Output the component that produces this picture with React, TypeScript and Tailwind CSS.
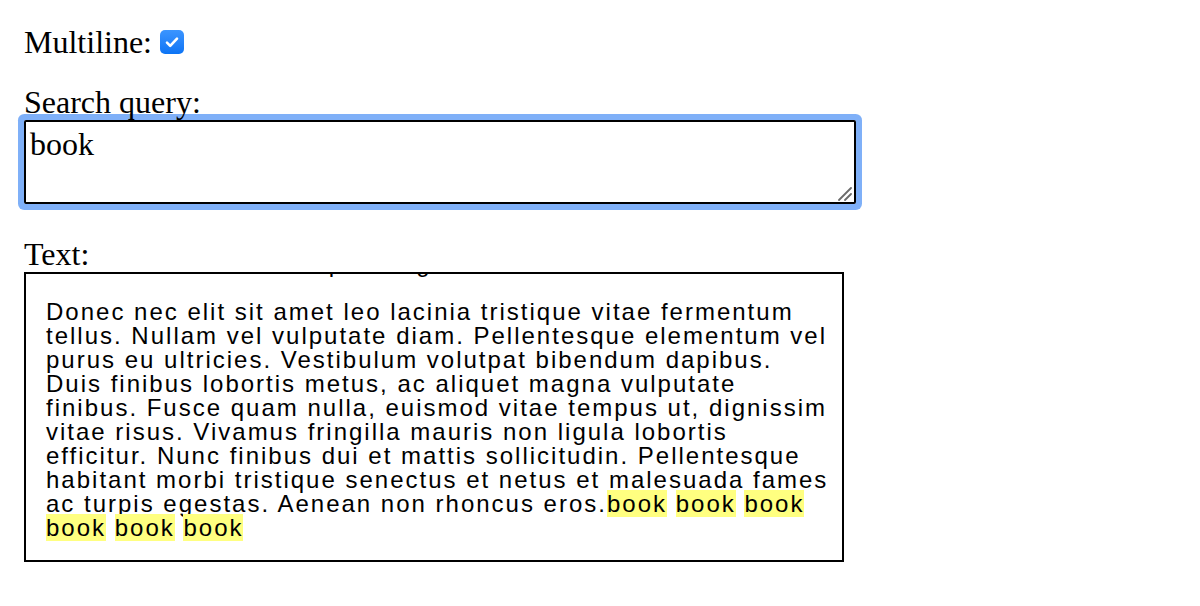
import { useEffect, useRef, useState } from "react";

const query = "book";

export default function App() {
  const [multiline, setMultiline] = useState(true);
  const boxRef = useRef<HTMLDivElement>(null);

  useEffect(() => {
    if (boxRef.current) boxRef.current.scrollTop = boxRef.current.scrollHeight;
  }, []);

  return (
    <div className="min-h-screen bg-white p-6 font-['Liberation_Serif',serif] text-[32px] text-black">
      <label className="flex h-9 items-center leading-9">
        Multiline:
        <span
          onClick={() => setMultiline(!multiline)}
          className={`ml-2 flex h-6 w-6 items-center justify-center rounded-[5px] ${multiline ? "bg-gradient-to-b from-[#3b95ff] to-[#0a74f5]" : "border border-gray-400 bg-white"}`}
        >
          {multiline && (
            <svg width="16" height="16" viewBox="0 0 16 16" fill="none">
              <path d="M3 8.6l3.2 3.2L13 4.6" stroke="white" strokeWidth="2.6" strokeLinecap="round" strokeLinejoin="round" />
            </svg>
          )}
        </span>
      </label>

      <div className="relative z-10 mt-6 leading-9">Search query:</div>
      <div className="relative w-[832px]">
        <textarea
          defaultValue={query}
          className="block h-[84px] w-[832px] resize-none rounded-[2px] border-2 border-black px-1 py-1 font-['Liberation_Serif',serif] text-[32px] leading-9 shadow-[0_0_0_6px_#7fb0f8] outline-none"
        />
        {/* resize grip */}
        <svg className="absolute bottom-[3px] right-[4px]" width="14" height="14" viewBox="0 0 14 14">
          <path d="M1 13L13 1M7 13L13 7" stroke="#6b6b6b" strokeWidth="1.8" strokeLinecap="round" />
        </svg>
      </div>

      <div className="mt-8 leading-9">Text:</div>
      <div
        ref={boxRef}
        className="h-[290px] w-[820px] overflow-hidden border-2 border-black pl-5 pr-[10px] pb-5 font-['Liberation_Sans',Arial,sans-serif] text-[24px] leading-6 tracking-[2px]"
      >
        <p className="pt-5">
          Lorem ipsum dolor sit amet, consectetur adipiscing elit. Praesent
          vulputate quam a nunc tempor, sed pharetra leo porttitor. Quisque
          sagittis augue eget magna placerat, in congue turpis egestas.
          <br />
          Aenean commodo semper ac gravida.
        </p>
        <p className="mt-6">
          Donec nec elit sit amet leo lacinia tristique vitae fermentum tellus.
          Nullam vel vulputate diam. Pellentesque elementum vel purus eu
          ultricies. Vestibulum volutpat bibendum dapibus. Duis finibus lobortis
          metus, ac aliquet magna vulputate finibus. Fusce quam nulla, euismod
          vitae tempus ut, dignissim vitae risus. Vivamus fringilla mauris non
          ligula lobortis efficitur. Nunc finibus dui et mattis sollicitudin.
          Pellentesque habitant morbi tristique senectus et netus et malesuada
          fames ac turpis egestas. Aenean non rhoncus eros.
          <mark className="bg-[#ffff80]">book</mark>{" "}
          <mark className="bg-[#ffff80]">book</mark>{" "}
          <mark className="bg-[#ffff80]">book</mark>{" "}
          <mark className="bg-[#ffff80]">book</mark>{" "}
          <mark className="bg-[#ffff80]">book</mark>{" "}
          <mark className="bg-[#ffff80]">book</mark>
        </p>
      </div>
    </div>
  );
}
